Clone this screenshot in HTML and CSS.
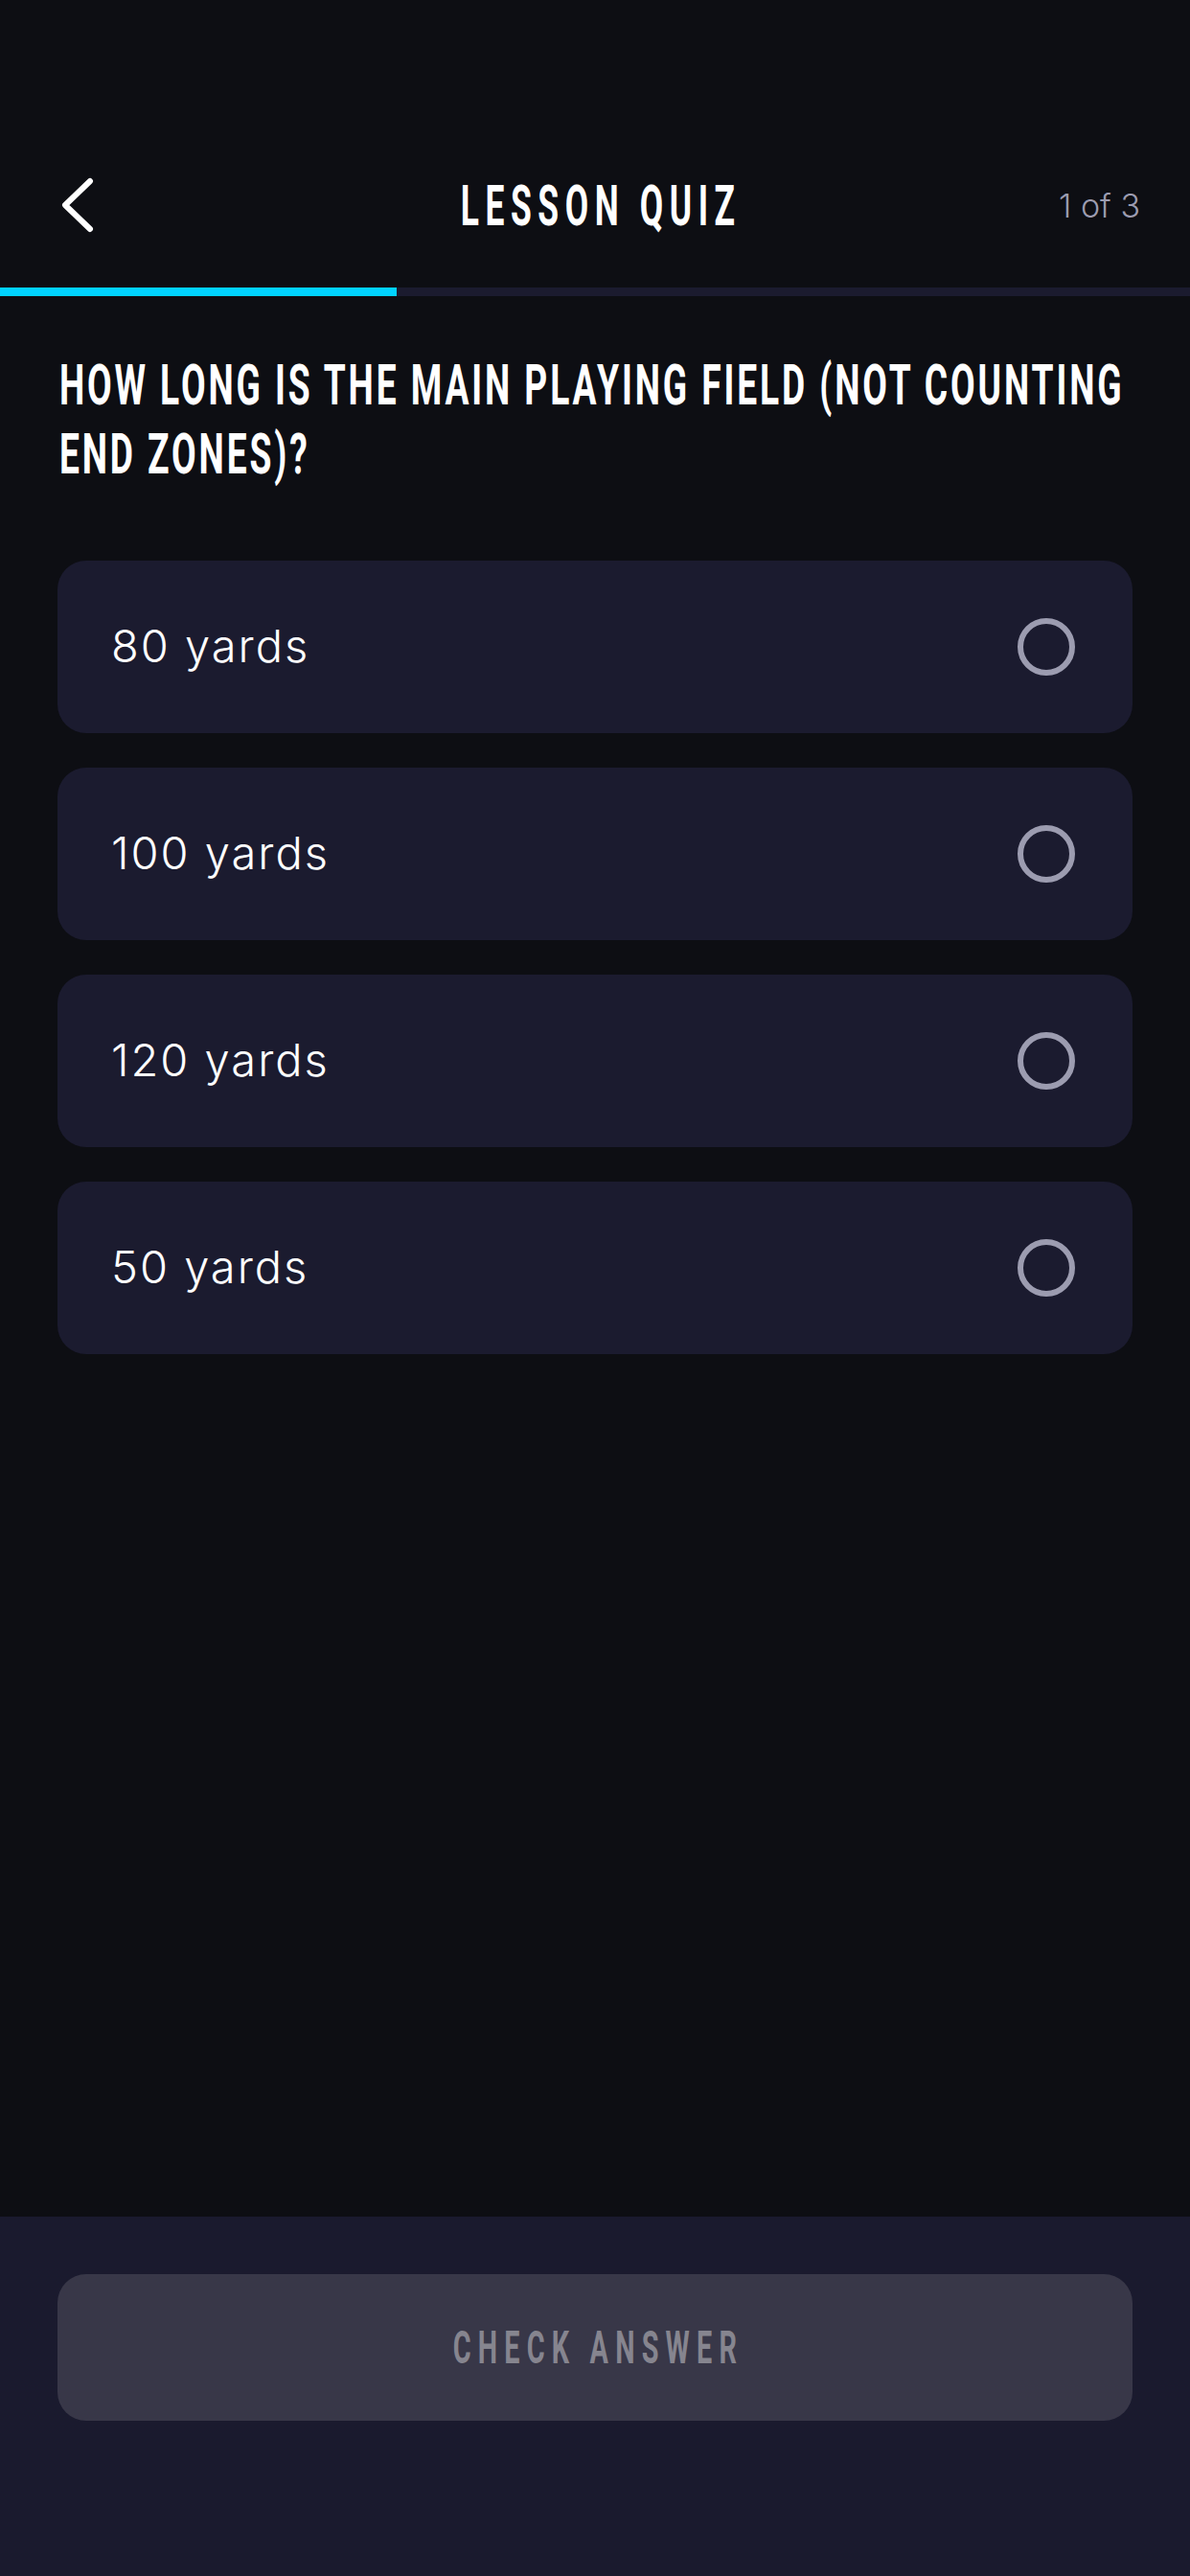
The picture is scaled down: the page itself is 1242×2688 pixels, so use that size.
FILE: index.html
```html
<!DOCTYPE html>
<html lang="en">
<head>
    <meta charset="UTF-8">
    <meta name="viewport" content="width=device-width, initial-scale=1.0">
    <title>Lesson Quiz</title>
    <link rel="stylesheet" href="styles.css">
</head>
<body>
    <div class="screen">
        <header class="top-bar">
            <button class="back-btn" aria-label="Back">
                <svg width="36" height="64" viewBox="0 0 36 64">
                    <polyline points="30,7 4,32 30,57" fill="none" stroke="#fff" stroke-width="6" stroke-linecap="round" stroke-linejoin="round"/>
                </svg>
            </button>
            <h1 class="title"><span class="narrow">Lesson Quiz</span></h1>
            <span class="step">1 of 3</span>
        </header>

        <div class="progress">
            <div class="progress-fill"></div>
        </div>

        <main class="quiz">
            <h2 class="question narrow">How long is the main playing field (not counting end zones)?</h2>

            <ul class="options">
                <li class="option"><span>80 yards</span><span class="radio"></span></li>
                <li class="option"><span>100 yards</span><span class="radio"></span></li>
                <li class="option"><span>120 yards</span><span class="radio"></span></li>
                <li class="option"><span>50 yards</span><span class="radio"></span></li>
            </ul>
        </main>

        <footer class="footer">
            <button class="check-btn" disabled><span class="narrow">Check Answer</span></button>
        </footer>
    </div>
</body>
</html>
```

FILE: styles.css
```css
body {
    margin: 0;
    padding: 0;
    background-color: #0d0e13;
    font-family: Inter, "Noto Sans", sans-serif;
    color: #fff;
}

.screen {
    display: flex;
    flex-direction: column;
    height: 2688px;
}

/* condensed display face, squeezed from Roboto bold */
.narrow {
    display: inline-block;
    font-family: Roboto, "Liberation Sans", sans-serif;
    font-weight: bold;
    text-transform: uppercase;
    transform: scaleX(0.6);
}

.top-bar {
    display: grid;
    grid-template-columns: 1fr auto 1fr;
    align-items: center;
    height: 108px;
    margin-top: 160px;
    padding: 0 52px 0 64px;
}

.back-btn {
    justify-self: start;
    display: flex;
    padding: 0;
    border: none;
    background: none;
    cursor: pointer;
}

.title {
    margin: 0;
    font-size: 59px;
    line-height: 1;
    letter-spacing: 11px;
}

.step {
    justify-self: end;
    font-size: 34px;
    font-weight: 300;
    color: #9c9cb0;
}

.progress {
    height: 9px;
    margin-top: 32px;
    background-color: #1b1b2f;
}

.progress-fill {
    width: 33.333%;
    height: 100%;
    background-color: #00d2ff;
}

.quiz {
    flex: 1;
    padding: 0 60px;
}

.question {
    display: block;
    width: calc(1150px / 0.63);
    margin: 57px 0 0;
    padding-left: 3px;
    font-size: 59px;
    line-height: 72px;
    letter-spacing: 4.6px;
    transform: scaleX(0.63);
    transform-origin: left top;
}

.options {
    display: flex;
    flex-direction: column;
    gap: 36px;
    margin: 75px 0 0;
    padding: 0;
    list-style: none;
}

.option {
    display: flex;
    align-items: center;
    justify-content: space-between;
    height: 180px;
    padding: 0 60px 4px 56px;
    box-sizing: border-box;
    border-radius: 30px;
    background-color: #1b1b2f;
    font-size: 47px;
    font-weight: 300;
    letter-spacing: 2px;
    cursor: pointer;
}

.radio {
    width: 48px;
    height: 48px;
    margin-top: 4px;
    border: 6px solid #9c9cb0;
    border-radius: 50%;
}

.footer {
    height: 375px;
    padding: 60px 60px 0;
    box-sizing: border-box;
    background-color: #1a1a2e;
}

.check-btn {
    width: 100%;
    height: 153px;
    border: none;
    border-radius: 30px;
    background-color: #383748;
    color: #86858f;
    font-size: 48px;
    letter-spacing: 12px;
}

.check-btn .narrow {
    padding-left: 12px;
}
```
